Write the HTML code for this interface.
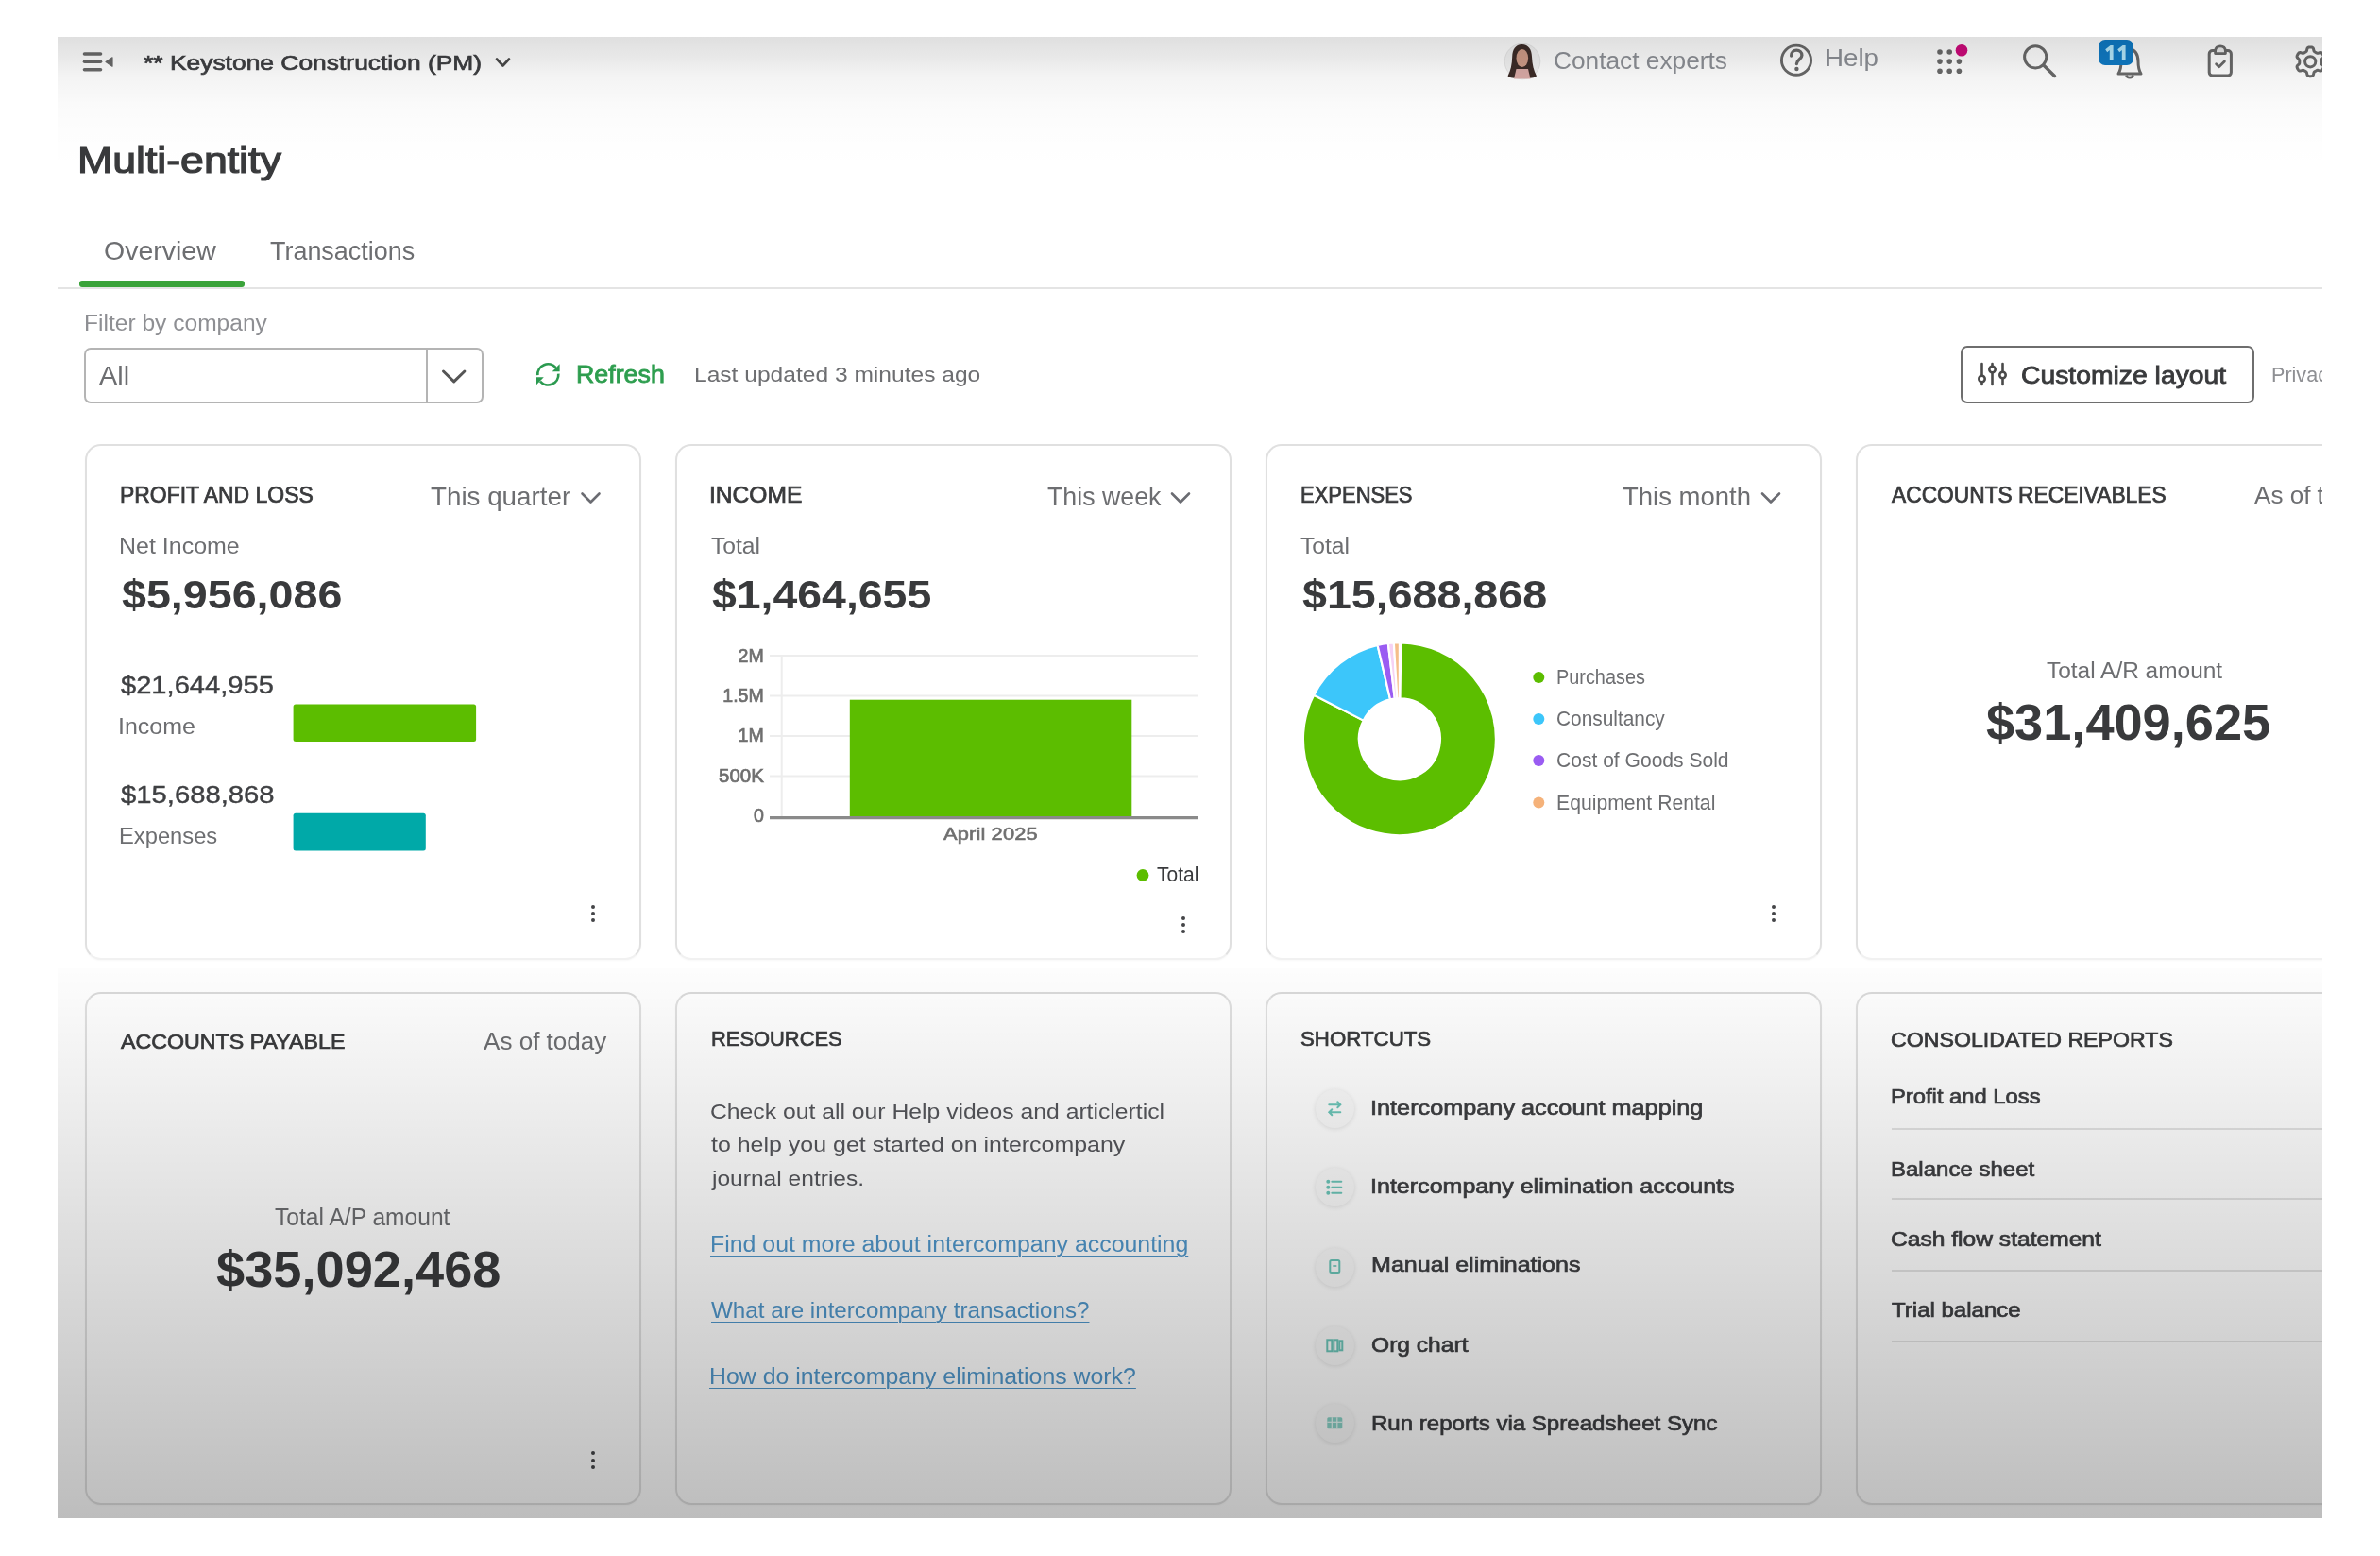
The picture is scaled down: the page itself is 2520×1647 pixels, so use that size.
<!DOCTYPE html>
<html><head><meta charset="utf-8"><title>Multi-entity</title>
<style>
html,body{margin:0;padding:0;background:#fff;}
body{width:2520px;height:1647px;position:relative;overflow:hidden;font-family:"Liberation Sans", sans-serif;}
#clip{position:absolute;left:0;top:0;width:2520px;height:1647px;clip-path:inset(39px 61px 40px 61px);background:#fff;filter:blur(0.7px);}
.abs{position:absolute;}
.t{position:absolute;line-height:1;white-space:nowrap;}
.card{position:absolute;box-sizing:border-box;border:2px solid #e0e0e0;border-radius:17px;background:#fff;box-shadow:0 1px 2px rgba(0,0,0,0.03);}
.r1{border-bottom-color:#f1f1f1;}
.r2{border-top-color:#dadada;}
.dot{position:absolute;width:3.9px;height:3.9px;border-radius:50%;background:#444548;}
.sc{position:absolute;width:41px;height:41px;border-radius:50%;background:#fafafa;box-shadow:0 1px 5px rgba(0,0,0,0.11);}
</style></head>
<body><div id="clip">
<div class="abs" style="left:61px;top:304px;width:2398px;height:2.4px;background:#e4e4e4"></div>
<div class="abs" style="left:84px;top:297.3px;width:174.7px;height:6.5px;background:#3aa33a;border-radius:3px"></div>
<div class="abs" style="left:89.3px;top:368px;width:422.3px;height:59.3px;box-sizing:border-box;border:2px solid #b4b4b4;border-radius:7px"></div>
<div class="abs" style="left:450.7px;top:369px;width:2px;height:57.3px;background:#b4b4b4"></div>
<div class="abs" style="left:2076.4px;top:366.2px;width:310.9px;height:60.8px;box-sizing:border-box;border:2.6px solid #6e6e6e;border-radius:7px"></div>
<div class="card r1" style="left:90px;top:470px;width:589px;height:546px"></div>
<div class="card r1" style="left:715px;top:470px;width:589px;height:546px"></div>
<div class="card r1" style="left:1340px;top:470px;width:589px;height:546px"></div>
<div class="card r1" style="left:1965px;top:470px;width:589px;height:546px"></div>
<div class="card r2" style="left:90px;top:1050px;width:589px;height:543px"></div>
<div class="card r2" style="left:715px;top:1050px;width:589px;height:543px"></div>
<div class="card r2" style="left:1340px;top:1050px;width:589px;height:543px"></div>
<div class="card r2" style="left:1965px;top:1050px;width:589px;height:543px"></div>

<!-- header icons -->
<svg class="abs" style="left:0;top:0" width="2520" height="460" viewBox="0 0 2520 460">
  <g stroke="#6a6a6a" stroke-width="3.6" stroke-linecap="round">
    <line x1="89.5" y1="57" x2="106.5" y2="57"/><line x1="89.5" y1="65.3" x2="106.5" y2="65.3"/><line x1="89.5" y1="73.8" x2="106.5" y2="73.8"/>
  </g>
  <path d="M112,65.5 L119,60.8 L119,70.2 Z" fill="#6a6a6a" stroke="#6a6a6a" stroke-width="1.2" stroke-linejoin="round"/>
  <path d="M526,62.5 L532.5,69.5 L539,62.5" fill="none" stroke="#4a4a4a" stroke-width="2.6" stroke-linecap="round" stroke-linejoin="round"/>
  <!-- avatar -->
  <circle cx="1612" cy="65" r="18.8" fill="#f3f3f3" stroke="#e6e6e6" stroke-width="1"/>
  <path d="M1611.5,47 C1604.5,47 1601.5,52.5 1601.2,60 C1601,68 1599.5,75 1596.5,80.5 C1600,83 1604.5,83.2 1607,82 L1616.5,82 C1619,83.2 1623.5,83 1627,80.5 C1624,75 1622.3,68 1622,60 C1621.8,52.5 1618.5,47 1611.5,47 Z" fill="#3d2c28"/>
  <ellipse cx="1611.8" cy="61.5" rx="6.3" ry="9.6" fill="#cf9c88"/>
  <path d="M1605.5,73 L1618,73 L1620.5,83.5 L1603,83.5 Z" fill="#d9aaa6"/>
  <!-- help -->
  <circle cx="1902" cy="63.7" r="15.6" fill="none" stroke="#6a6a6a" stroke-width="2.9"/>
  <path d="M1896.6,59 C1896.6,55.2 1899.2,53.2 1902.2,53.2 C1905.6,53.2 1907.9,55.6 1907.9,58.5 C1907.9,62.8 1902.4,63 1902.4,67.6" fill="none" stroke="#6a6a6a" stroke-width="3.3" stroke-linecap="round"/>
  <circle cx="1902.4" cy="73" r="2.2" fill="#6a6a6a"/>
  <!-- grid -->
  <g fill="#6a6a6a">
    <circle cx="2054" cy="55" r="2.8"/><circle cx="2064.2" cy="55" r="2.8"/>
    <circle cx="2054" cy="65.1" r="2.8"/><circle cx="2064.2" cy="65.1" r="2.8"/><circle cx="2074.4" cy="65.1" r="2.8"/>
    <circle cx="2054" cy="75.3" r="2.8"/><circle cx="2064.2" cy="75.3" r="2.8"/><circle cx="2074.4" cy="75.3" r="2.8"/>
  </g>
  <circle cx="2077" cy="53.2" r="6.3" fill="#cf0a7c"/>
  <!-- search -->
  <circle cx="2155.2" cy="60.3" r="11.6" fill="none" stroke="#6a6a6a" stroke-width="3"/>
  <line x1="2163.8" y1="69" x2="2175.5" y2="80.5" stroke="#6a6a6a" stroke-width="3.4" stroke-linecap="round"/>
  <!-- bell -->
  <path d="M2243,78 C2245,75 2246,71 2246,65 C2246,57 2250,52 2255,52 C2260,52 2264,57 2264,65 C2264,71 2265,75 2267,78 Z" fill="none" stroke="#6a6a6a" stroke-width="3" stroke-linejoin="round"/>
  <path d="M2251.5,79.5 C2252,83 2258,83 2258.5,79.5" fill="none" stroke="#6a6a6a" stroke-width="2.6"/>
  <rect x="2222" y="42" width="37" height="27" rx="7" fill="#0f7bc6"/>
  <!-- clipboard -->
  <rect x="2339.2" y="53.5" width="23.2" height="26.6" rx="3.5" fill="none" stroke="#6a6a6a" stroke-width="3"/>
  <path d="M2345.6,56.6 L2345.6,54 C2345.6,50.6 2348,48.8 2351,48.8 C2354,48.8 2356.4,50.6 2356.4,54 L2356.4,56.6 Z" fill="#ececec" stroke="#6a6a6a" stroke-width="2.8" stroke-linejoin="round"/>
  <path d="M2346.6,67.8 L2349.6,70.8 L2355.4,65" fill="none" stroke="#6a6a6a" stroke-width="2.8" stroke-linecap="round" stroke-linejoin="round"/>
  <!-- gear -->
  <path d="M2446.20,49.90 L2446.74,49.91 L2447.27,49.96 L2447.80,50.05 L2448.32,50.20 L2448.81,50.49 L2449.24,51.01 L2449.55,51.85 L2449.77,52.86 L2449.97,53.71 L2450.22,54.25 L2450.53,54.59 L2450.86,54.83 L2451.21,55.03 L2451.55,55.23 L2451.90,55.43 L2452.24,55.63 L2452.59,55.83 L2452.94,56.03 L2453.31,56.19 L2453.76,56.29 L2454.36,56.24 L2455.19,55.99 L2456.17,55.67 L2457.06,55.52 L2457.72,55.63 L2458.21,55.91 L2458.61,56.29 L2458.95,56.70 L2459.26,57.14 L2459.54,57.60 L2459.79,58.07 L2460.02,58.56 L2460.21,59.06 L2460.33,59.59 L2460.33,60.16 L2460.10,60.78 L2459.53,61.48 L2458.75,62.17 L2458.12,62.77 L2457.78,63.26 L2457.64,63.69 L2457.60,64.10 L2457.59,64.50 L2457.60,64.90 L2457.60,65.30 L2457.60,65.70 L2457.59,66.10 L2457.60,66.50 L2457.64,66.91 L2457.78,67.34 L2458.12,67.83 L2458.75,68.43 L2459.53,69.12 L2460.10,69.82 L2460.33,70.44 L2460.33,71.01 L2460.21,71.54 L2460.02,72.04 L2459.79,72.53 L2459.54,73.00 L2459.26,73.46 L2458.95,73.90 L2458.61,74.31 L2458.21,74.69 L2457.72,74.97 L2457.06,75.08 L2456.17,74.93 L2455.19,74.61 L2454.36,74.36 L2453.76,74.31 L2453.31,74.41 L2452.94,74.57 L2452.59,74.77 L2452.24,74.97 L2451.90,75.17 L2451.55,75.37 L2451.21,75.57 L2450.86,75.77 L2450.53,76.01 L2450.22,76.35 L2449.97,76.89 L2449.77,77.74 L2449.55,78.75 L2449.24,79.59 L2448.81,80.11 L2448.32,80.40 L2447.80,80.55 L2447.27,80.64 L2446.74,80.69 L2446.20,80.70 L2445.66,80.69 L2445.13,80.64 L2444.60,80.55 L2444.08,80.40 L2443.59,80.11 L2443.16,79.59 L2442.85,78.75 L2442.63,77.74 L2442.43,76.89 L2442.18,76.35 L2441.87,76.01 L2441.54,75.77 L2441.19,75.57 L2440.85,75.37 L2440.50,75.17 L2440.16,74.97 L2439.81,74.77 L2439.46,74.57 L2439.09,74.41 L2438.64,74.31 L2438.04,74.36 L2437.21,74.61 L2436.23,74.93 L2435.34,75.08 L2434.68,74.97 L2434.19,74.69 L2433.79,74.31 L2433.45,73.90 L2433.14,73.46 L2432.86,73.00 L2432.61,72.53 L2432.38,72.04 L2432.19,71.54 L2432.07,71.01 L2432.07,70.44 L2432.30,69.82 L2432.87,69.12 L2433.65,68.43 L2434.28,67.83 L2434.62,67.34 L2434.76,66.91 L2434.80,66.50 L2434.81,66.10 L2434.80,65.70 L2434.80,65.30 L2434.80,64.90 L2434.81,64.50 L2434.80,64.10 L2434.76,63.69 L2434.62,63.26 L2434.28,62.77 L2433.65,62.17 L2432.87,61.48 L2432.30,60.78 L2432.07,60.16 L2432.07,59.59 L2432.19,59.06 L2432.38,58.56 L2432.61,58.07 L2432.86,57.60 L2433.14,57.14 L2433.45,56.70 L2433.79,56.29 L2434.19,55.91 L2434.68,55.63 L2435.34,55.52 L2436.23,55.67 L2437.21,55.99 L2438.04,56.24 L2438.64,56.29 L2439.09,56.19 L2439.46,56.03 L2439.81,55.83 L2440.16,55.63 L2440.50,55.43 L2440.85,55.23 L2441.19,55.03 L2441.54,54.83 L2441.87,54.59 L2442.18,54.25 L2442.43,53.71 L2442.63,52.86 L2442.85,51.85 L2443.16,51.01 L2443.59,50.49 L2444.08,50.20 L2444.60,50.05 L2445.13,49.96 L2445.66,49.91 Z" fill="none" stroke="#6a6a6a" stroke-width="3" stroke-linejoin="round"/>
  <circle cx="2446.2" cy="65.3" r="5.6" fill="none" stroke="#6a6a6a" stroke-width="3"/>
  <!-- refresh -->
  <g fill="none" stroke="#2b9a50" stroke-width="2.7" stroke-linecap="butt">
    <path d="M569.3,397.2 A11,11 0 0 1 588.6,389.2"/>
    <path d="M591.3,395.6 A11,11 0 0 1 572.0,403.6"/>
  </g>
  <path d="M592.6,385.2 L592.6,393.2 L584.8,393.2 Z" fill="#2b9a50"/>
  <path d="M568.0,399.2 L575.8,399.2 L568.0,407.2 Z" fill="#2b9a50"/>
  <!-- select chevron -->
  <path d="M469.5,393 L480.7,403.8 L491.9,393" fill="none" stroke="#555" stroke-width="3" stroke-linecap="round" stroke-linejoin="round"/>
  <!-- slider icon -->
  <g stroke="#4a4a4a" stroke-width="2.6" stroke-linecap="round" fill="#fff">
    <line x1="2098.5" y1="385" x2="2098.5" y2="407"/><line x1="2109.5" y1="385" x2="2109.5" y2="407"/><line x1="2120.5" y1="385" x2="2120.5" y2="407"/>
    <circle cx="2098.5" cy="401" r="3.2"/><circle cx="2109.5" cy="391" r="3.2"/><circle cx="2120.5" cy="397" r="3.2"/>
  </g>
</svg>


<svg class="abs" style="left:0;top:440px" width="2520" height="600" viewBox="0 440 2520 600">
  <!-- card chevrons -->
  <g fill="none" stroke="#6b6c72" stroke-width="2.6" stroke-linecap="round" stroke-linejoin="round">
    <path d="M616.5,522.5 L625.5,531.5 L634.5,522.5"/>
    <path d="M1241,522.5 L1250,531.5 L1259,522.5"/>
    <path d="M1866,522.5 L1875,531.5 L1884,522.5"/>
  </g>
  <!-- bars card1 -->
  <rect x="310.6" y="745.4" width="193.5" height="39.6" rx="2.5" fill="#5cbd00"/>
  <rect x="310.6" y="860.7" width="140.2" height="39.7" rx="2.5" fill="#00a9a8"/>
  <!-- bar chart -->
  <g stroke="#ededed" stroke-width="2">
    <line x1="815" y1="694.1" x2="1269" y2="694.1"/><line x1="815" y1="736.6" x2="1269" y2="736.6"/>
    <line x1="815" y1="779.1" x2="1269" y2="779.1"/><line x1="815" y1="821.5" x2="1269" y2="821.5"/>
    <line x1="827.7" y1="694" x2="827.7" y2="864"/>
  </g>
  <rect x="899.8" y="740.7" width="298.5" height="124" fill="#5cbd00"/>
  <line x1="815" y1="865.6" x2="1269" y2="865.6" stroke="#8a8a8a" stroke-width="3.2"/>
  <circle cx="1210" cy="926.5" r="6.4" fill="#5cbd00"/>
  <!-- donut -->
  <path d="M1483.32,680.31 A102,102 0 1 1 1391.18,735.68 L1443.66,762.64 A43,43 0 1 0 1482.50,739.30 Z" fill="#5cbe00" stroke="#fff" stroke-width="2.2"/><path d="M1391.18,735.68 A102,102 0 0 1 1458.61,682.99 L1472.08,740.44 A43,43 0 0 0 1443.66,762.64 Z" fill="#3cc6fa" stroke="#fff" stroke-width="2.2"/><path d="M1458.61,682.99 A102,102 0 0 1 1469.82,681.02 L1476.81,739.60 A43,43 0 0 0 1472.08,740.44 Z" fill="#9a5cf2" stroke="#fff" stroke-width="2.2"/><path d="M1469.82,681.02 A102,102 0 0 1 1475.85,680.48 L1479.35,739.38 A43,43 0 0 0 1476.81,739.60 Z" fill="#f6d2f4" stroke="#fff" stroke-width="2.2"/><path d="M1475.85,680.48 A102,102 0 0 1 1481.90,680.30 L1481.90,739.30 A43,43 0 0 0 1479.35,739.38 Z" fill="#f5be8a" stroke="#fff" stroke-width="2.2"/>
  <circle cx="1629.3" cy="716.9" r="6" fill="#5cbd00"/>
  <circle cx="1629.3" cy="761.1" r="6" fill="#3cc6fa"/>
  <circle cx="1629.3" cy="805.1" r="6" fill="#9a5cf2"/>
  <circle cx="1629.3" cy="849.5" r="6" fill="#f5b27a"/>
</svg>

<div class="sc" style="left:1392.8px;top:1152.8px"></div><div class="sc" style="left:1392.8px;top:1236.3px"></div><div class="sc" style="left:1392.8px;top:1320.5px"></div><div class="sc" style="left:1392.8px;top:1403.8px"></div><div class="sc" style="left:1392.8px;top:1485.8px"></div>
<svg class="abs" style="left:0;top:1100px" width="2520" height="460" viewBox="0 1100 2520 460"><path d="M1407.3,1169.3 L1419.3,1169.3 M1416.3,1166.3 L1419.3,1169.3 L1416.3,1172.3 M1419.3,1177.3 L1407.3,1177.3 M1410.3,1174.3 L1407.3,1177.3 L1410.3,1180.3" stroke="#6cc5b8" stroke-width="2" fill="none" stroke-linecap="round"/><g stroke="#6cc5b8" stroke-width="2" stroke-linecap="round"><line x1="1410.3" y1="1250.8" x2="1420.3" y2="1250.8"/><circle cx="1406.3" cy="1250.8" r="1" fill="#6cc5b8"/><line x1="1410.3" y1="1256.8" x2="1420.3" y2="1256.8"/><circle cx="1406.3" cy="1256.8" r="1" fill="#6cc5b8"/><line x1="1410.3" y1="1262.8" x2="1420.3" y2="1262.8"/><circle cx="1406.3" cy="1262.8" r="1" fill="#6cc5b8"/></g><rect x="1408.3" y="1334" width="10" height="13" rx="1.5" stroke="#6cc5b8" stroke-width="2" fill="none"/><line x1="1411.3" y1="1340" x2="1415.3" y2="1340" stroke="#6cc5b8" stroke-width="1.6"/><g stroke="#6cc5b8" stroke-width="2" fill="none"><rect x="1405.3" y="1418.3" width="5" height="12"/><rect x="1412.3" y="1418.3" width="4" height="12"/><rect x="1418.3" y="1419.3" width="3" height="10"/></g><rect x="1405.3" y="1500.3" width="16" height="12" rx="1.5" fill="#6cc5b8" opacity="0.8"/><g stroke="#e8f6f3" stroke-width="1.2"><line x1="1410.3" y1="1500.3" x2="1410.3" y2="1512.3"/><line x1="1415.8" y1="1500.3" x2="1415.8" y2="1512.3"/><line x1="1405.3" y1="1505.3" x2="1421.3" y2="1505.3"/></g></svg>
<div class="abs" style="left:2002.7px;top:1194px;width:460px;height:2px;background:#e3e3e3"></div>
<div class="abs" style="left:2002.7px;top:1268px;width:460px;height:2px;background:#e3e3e3"></div>
<div class="abs" style="left:2002.7px;top:1343.7px;width:460px;height:2px;background:#e3e3e3"></div>
<div class="abs" style="left:2002.7px;top:1419px;width:460px;height:2px;background:#e3e3e3"></div>
<div class="dot" style="left:626.35px;top:957.85px"></div><div class="dot" style="left:626.35px;top:965.05px"></div><div class="dot" style="left:626.35px;top:972.25px"></div>
<div class="dot" style="left:1251.45px;top:970.05px"></div><div class="dot" style="left:1251.45px;top:977.25px"></div><div class="dot" style="left:1251.45px;top:984.45px"></div>
<div class="dot" style="left:1876.05px;top:957.65px"></div><div class="dot" style="left:1876.05px;top:964.85px"></div><div class="dot" style="left:1876.05px;top:972.05px"></div>
<div class="dot" style="left:626.15px;top:1536.45px"></div><div class="dot" style="left:626.15px;top:1543.65px"></div><div class="dot" style="left:626.15px;top:1550.85px"></div>
<div class="t" style="left:151.82px;top:55.58px;font-size:22.44px;font-weight:400;color:#3d3e41;letter-spacing:0.000px;transform:scaleX(1.1771);transform-origin:0 0;-webkit-text-stroke:0.72px #3d3e41;">** Keystone Construction (PM)</div>
<div class="t" style="left:1645.49px;top:52.18px;font-size:25.94px;font-weight:400;color:#8d9096;letter-spacing:0.000px;transform:scaleX(1.0128);transform-origin:0 0;">Contact experts</div>
<div class="t" style="left:1931.85px;top:48.80px;font-size:25.80px;font-weight:400;color:#8d9096;letter-spacing:0.000px;transform:scaleX(1.0753);transform-origin:0 0;">Help</div>
<div class="t" style="left:82.26px;top:150.81px;font-size:38.78px;font-weight:400;color:#393a3c;letter-spacing:0.000px;transform:scaleX(1.1510);transform-origin:0 0;-webkit-text-stroke:1.24px #393a3c;">Multi-entity</div>
<div class="t" style="left:109.75px;top:251.80px;font-size:27.10px;font-weight:400;color:#6d6e71;letter-spacing:-0.000px;transform:scaleX(1.0521);transform-origin:0 0;">Overview</div>
<div class="t" style="left:286.40px;top:251.80px;font-size:27.10px;font-weight:400;color:#6d6e71;letter-spacing:0.000px;transform:scaleX(0.9938);transform-origin:0 0;">Transactions</div>
<div class="t" style="left:89.23px;top:331.23px;font-size:23.04px;font-weight:400;color:#8e8f93;letter-spacing:0.000px;transform:scaleX(1.0666);transform-origin:0 0;">Filter by company</div>
<div class="t" style="left:104.80px;top:383.68px;font-size:27.25px;font-weight:400;color:#6d6e71;letter-spacing:0.000px;transform:scaleX(1.0576);transform-origin:0 0;">All</div>
<div class="t" style="left:610.35px;top:383.52px;font-size:25.76px;font-weight:400;color:#2e9e4f;letter-spacing:0.000px;transform:scaleX(1.0403);transform-origin:0 0;-webkit-text-stroke:0.82px #2e9e4f;">Refresh</div>
<div class="t" style="left:735.25px;top:387.00px;font-size:21.30px;font-weight:400;color:#6d6e71;letter-spacing:0.000px;transform:scaleX(1.1536);transform-origin:0 0;">Last updated 3 minutes ago</div>
<div class="t" style="left:2140.32px;top:384.53px;font-size:24.93px;font-weight:400;color:#393a3c;letter-spacing:-0.000px;transform:scaleX(1.1360);transform-origin:0 0;-webkit-text-stroke:0.80px #393a3c;">Customize layout</div>
<div class="t" style="left:2405.00px;top:386.45px;font-size:21.59px;font-weight:400;color:#8e8f93;letter-spacing:0.000px;">Privacy</div>
<div class="t" style="left:126.77px;top:512.70px;font-size:22.99px;font-weight:400;color:#393a3c;letter-spacing:0.000px;transform:scaleX(0.9976);transform-origin:0 0;-webkit-text-stroke:0.74px #393a3c;">PROFIT AND LOSS</div>
<div class="t" style="left:455.90px;top:511.89px;font-size:27.83px;font-weight:400;color:#6d6e71;letter-spacing:0.000px;transform:scaleX(0.9978);transform-origin:0 0;">This quarter</div>
<div class="t" style="left:126.33px;top:566.88px;font-size:23.33px;font-weight:400;color:#6d6e71;letter-spacing:0.000px;transform:scaleX(1.0707);transform-origin:0 0;">Net Income</div>
<div class="t" style="left:128.70px;top:608.81px;font-size:41.88px;font-weight:700;color:#393a3c;letter-spacing:0.000px;transform:scaleX(1.1133);transform-origin:0 0;">$5,956,086</div>
<div class="t" style="left:127.63px;top:712.33px;font-size:26.35px;font-weight:400;color:#3f4043;letter-spacing:0.000px;transform:scaleX(1.1047);transform-origin:0 0;-webkit-text-stroke:0.42px #3f4043;">$21,644,955</div>
<div class="t" style="left:125.32px;top:757.27px;font-size:24.06px;font-weight:400;color:#6d6e71;letter-spacing:0.000px;transform:scaleX(1.0394);transform-origin:0 0;">Income</div>
<div class="t" style="left:127.63px;top:827.63px;font-size:26.35px;font-weight:400;color:#3f4043;letter-spacing:0.000px;transform:scaleX(1.1095);transform-origin:0 0;-webkit-text-stroke:0.42px #3f4043;">$15,688,868</div>
<div class="t" style="left:126.38px;top:873.98px;font-size:23.33px;font-weight:400;color:#6d6e71;letter-spacing:-0.000px;transform:scaleX(1.0170);transform-origin:0 0;">Expenses</div>
<div class="t" style="left:751.45px;top:512.70px;font-size:22.99px;font-weight:400;color:#393a3c;letter-spacing:0.000px;transform:scaleX(1.0693);transform-origin:0 0;-webkit-text-stroke:0.74px #393a3c;">INCOME</div>
<div class="t" style="left:1108.60px;top:511.89px;font-size:27.83px;font-weight:400;color:#6d6e71;letter-spacing:0.000px;transform:scaleX(0.9610);transform-origin:0 0;">This week</div>
<div class="t" style="left:753.00px;top:566.88px;font-size:23.33px;font-weight:400;color:#6d6e71;letter-spacing:0.000px;transform:scaleX(1.0542);transform-origin:0 0;">Total</div>
<div class="t" style="left:753.70px;top:608.81px;font-size:41.88px;font-weight:700;color:#393a3c;letter-spacing:0.000px;transform:scaleX(1.1080);transform-origin:0 0;">$1,464,655</div>
<div class="t" style="left:998.75px;top:874.32px;font-size:18.56px;font-weight:400;color:#6f6f6f;letter-spacing:0.106px;transform:scaleX(1.1800);transform-origin:0 0;-webkit-text-stroke:0.59px #6f6f6f;">April 2025</div>
<div class="t" style="left:1225.20px;top:915.78px;font-size:21.45px;font-weight:400;color:#393a3c;letter-spacing:0.000px;transform:scaleX(0.9793);transform-origin:0 0;">Total</div>
<div class="t" style="left:1376.80px;top:512.70px;font-size:22.99px;font-weight:400;color:#393a3c;letter-spacing:0.000px;transform:scaleX(0.9561);transform-origin:0 0;-webkit-text-stroke:0.74px #393a3c;">EXPENSES</div>
<div class="t" style="left:1718.30px;top:511.89px;font-size:27.83px;font-weight:400;color:#6d6e71;letter-spacing:0.000px;transform:scaleX(0.9882);transform-origin:0 0;">This month</div>
<div class="t" style="left:1377.40px;top:566.88px;font-size:23.33px;font-weight:400;color:#6d6e71;letter-spacing:0.000px;transform:scaleX(1.0563);transform-origin:0 0;">Total</div>
<div class="t" style="left:1378.70px;top:608.81px;font-size:41.88px;font-weight:700;color:#393a3c;letter-spacing:0.000px;transform:scaleX(1.1124);transform-origin:0 0;">$15,688,868</div>
<div class="t" style="left:1648.07px;top:706.98px;font-size:21.45px;font-weight:400;color:#6d6e71;letter-spacing:0.000px;transform:scaleX(0.9270);transform-origin:0 0;">Purchases</div>
<div class="t" style="left:1648.03px;top:751.18px;font-size:21.45px;font-weight:400;color:#6d6e71;letter-spacing:0.000px;transform:scaleX(0.9731);transform-origin:0 0;">Consultancy</div>
<div class="t" style="left:1648.02px;top:795.38px;font-size:21.45px;font-weight:400;color:#6d6e71;letter-spacing:0.000px;transform:scaleX(0.9822);transform-origin:0 0;">Cost of Goods Sold</div>
<div class="t" style="left:1648.01px;top:839.58px;font-size:21.45px;font-weight:400;color:#6d6e71;letter-spacing:0.000px;transform:scaleX(0.9879);transform-origin:0 0;">Equipment Rental</div>
<div class="t" style="left:2003.06px;top:512.70px;font-size:22.99px;font-weight:400;color:#393a3c;letter-spacing:0.000px;transform:scaleX(0.9907);transform-origin:0 0;-webkit-text-stroke:0.74px #393a3c;">ACCOUNTS RECEIVABLES</div>
<div class="t" style="left:2387.10px;top:511.99px;font-size:25.22px;font-weight:400;color:#6d6e71;letter-spacing:0.000px;transform:scaleX(1.0333);transform-origin:0 0;">As of today</div>
<div class="t" style="left:2166.80px;top:698.56px;font-size:23.48px;font-weight:400;color:#6d6e71;letter-spacing:-0.000px;transform:scaleX(1.0416);transform-origin:0 0;">Total A/R amount</div>
<div class="t" style="left:2103.30px;top:738.28px;font-size:53.04px;font-weight:700;color:#393a3c;letter-spacing:0.000px;transform:scaleX(1.0210);transform-origin:0 0;">$31,409,625</div>
<div class="t" style="left:127.77px;top:1091.50px;font-size:22.30px;font-weight:400;color:#393a3c;letter-spacing:0.000px;transform:scaleX(1.0414);transform-origin:0 0;-webkit-text-stroke:0.71px #393a3c;">ACCOUNTS PAYABLE</div>
<div class="t" style="left:511.80px;top:1090.19px;font-size:25.22px;font-weight:400;color:#6d6e71;letter-spacing:0.000px;transform:scaleX(1.0333);transform-origin:0 0;">As of today</div>
<div class="t" style="left:291.40px;top:1275.99px;font-size:25.22px;font-weight:400;color:#6d6e71;letter-spacing:0.000px;transform:scaleX(0.9749);transform-origin:0 0;">Total A/P amount</div>
<div class="t" style="left:228.60px;top:1317.90px;font-size:52.90px;font-weight:700;color:#393a3c;letter-spacing:0.000px;transform:scaleX(1.0248);transform-origin:0 0;">$35,092,468</div>
<div class="t" style="left:752.56px;top:1088.52px;font-size:22.16px;font-weight:400;color:#393a3c;letter-spacing:0.000px;transform:scaleX(0.9879);transform-origin:0 0;-webkit-text-stroke:0.71px #393a3c;">RESOURCES</div>
<div class="t" style="left:752.11px;top:1166.20px;font-size:22.61px;font-weight:400;color:#55565b;letter-spacing:0.000px;transform:scaleX(1.0937);transform-origin:0 0;">Check out all our Help videos and articlerticl</div>
<div class="t" style="left:753.20px;top:1201.30px;font-size:22.61px;font-weight:400;color:#55565b;letter-spacing:0.000px;transform:scaleX(1.1036);transform-origin:0 0;">to help you get started on intercompany</div>
<div class="t" style="left:754.29px;top:1237.20px;font-size:22.61px;font-weight:400;color:#55565b;letter-spacing:0.000px;transform:scaleX(1.0864);transform-origin:0 0;">journal entries.</div>
<div class="t" style="left:752.14px;top:1305.66px;font-size:23.48px;font-weight:400;color:#5097cb;letter-spacing:-0.000px;transform:scaleX(1.0603);transform-origin:0 0;text-decoration:underline;text-decoration-thickness:1.4px;text-underline-offset:3.5px">Find out more about intercompany accounting</div>
<div class="t" style="left:753.20px;top:1375.71px;font-size:23.19px;font-weight:400;color:#5097cb;letter-spacing:0.000px;transform:scaleX(1.0427);transform-origin:0 0;text-decoration:underline;text-decoration-thickness:1.4px;text-underline-offset:3.5px">What are intercompany transactions?</div>
<div class="t" style="left:751.16px;top:1445.13px;font-size:24.35px;font-weight:400;color:#5097cb;letter-spacing:0.000px;transform:scaleX(1.0213);transform-origin:0 0;text-decoration:underline;text-decoration-thickness:1.4px;text-underline-offset:3.5px">How do intercompany eliminations work?</div>
<div class="t" style="left:1376.75px;top:1088.52px;font-size:22.16px;font-weight:400;color:#393a3c;letter-spacing:0.000px;transform:scaleX(1.0052);transform-origin:0 0;-webkit-text-stroke:0.71px #393a3c;">SHORTCUTS</div>
<div class="t" style="left:1450.64px;top:1161.50px;font-size:22.30px;font-weight:400;color:#3d3e41;letter-spacing:0.000px;transform:scaleX(1.1327);transform-origin:0 0;-webkit-text-stroke:0.71px #3d3e41;">Intercompany account mapping</div>
<div class="t" style="left:1450.65px;top:1244.70px;font-size:22.30px;font-weight:400;color:#3d3e41;letter-spacing:0.000px;transform:scaleX(1.1231);transform-origin:0 0;-webkit-text-stroke:0.71px #3d3e41;">Intercompany elimination accounts</div>
<div class="t" style="left:1451.78px;top:1328.00px;font-size:22.30px;font-weight:400;color:#3d3e41;letter-spacing:0.000px;transform:scaleX(1.1242);transform-origin:0 0;-webkit-text-stroke:0.71px #3d3e41;">Manual eliminations</div>
<div class="t" style="left:1451.79px;top:1412.50px;font-size:22.30px;font-weight:400;color:#3d3e41;letter-spacing:0.000px;transform:scaleX(1.1029);transform-origin:0 0;-webkit-text-stroke:0.71px #3d3e41;">Org chart</div>
<div class="t" style="left:1451.81px;top:1495.80px;font-size:22.30px;font-weight:400;color:#3d3e41;letter-spacing:0.000px;transform:scaleX(1.0790);transform-origin:0 0;-webkit-text-stroke:0.71px #3d3e41;">Run reports via Spreadsheet Sync</div>
<div class="t" style="left:2002.03px;top:1089.90px;font-size:22.30px;font-weight:400;color:#393a3c;letter-spacing:0.000px;transform:scaleX(1.0384);transform-origin:0 0;-webkit-text-stroke:0.71px #393a3c;">CONSOLIDATED REPORTS</div>
<div class="t" style="left:2002.01px;top:1150.32px;font-size:22.16px;font-weight:400;color:#3d3e41;letter-spacing:0.000px;transform:scaleX(1.0731);transform-origin:0 0;-webkit-text-stroke:0.71px #3d3e41;">Profit and Loss</div>
<div class="t" style="left:2002.00px;top:1227.02px;font-size:22.16px;font-weight:400;color:#3d3e41;letter-spacing:0.000px;transform:scaleX(1.0837);transform-origin:0 0;-webkit-text-stroke:0.71px #3d3e41;">Balance sheet</div>
<div class="t" style="left:2001.98px;top:1300.82px;font-size:22.16px;font-weight:400;color:#3d3e41;letter-spacing:0.000px;transform:scaleX(1.1104);transform-origin:0 0;-webkit-text-stroke:0.71px #3d3e41;">Cash flow statement</div>
<div class="t" style="left:2003.08px;top:1376.12px;font-size:22.16px;font-weight:400;color:#3d3e41;letter-spacing:0.000px;transform:scaleX(1.0846);transform-origin:0 0;-webkit-text-stroke:0.71px #3d3e41;">Trial balance</div>
<div class="t" style="left:608.8px;width:200px;text-align:right;top:684.97px;font-size:19.57px;font-weight:400;color:#6f6f6f;-webkit-text-stroke:0.7px #6f6f6f">2M</div>
<div class="t" style="left:608.8px;width:200px;text-align:right;top:726.77px;font-size:19.57px;font-weight:400;color:#6f6f6f;-webkit-text-stroke:0.7px #6f6f6f">1.5M</div>
<div class="t" style="left:608.8px;width:200px;text-align:right;top:769.17px;font-size:19.57px;font-weight:400;color:#6f6f6f;-webkit-text-stroke:0.7px #6f6f6f">1M</div>
<div class="t" style="left:608.8px;width:200px;text-align:right;top:811.43px;font-size:20.43px;font-weight:400;color:#6f6f6f;-webkit-text-stroke:0.7px #6f6f6f">500K</div>
<div class="t" style="left:608.8px;width:200px;text-align:right;top:853.97px;font-size:19.57px;font-weight:400;color:#6f6f6f;-webkit-text-stroke:0.7px #6f6f6f">0</div>
<svg class="abs" style="left:2215px;top:40px" width="50" height="30" viewBox="2215 40 50 30"><path d="M2229.2,52.2 L2234.6,48 L2237.6,48 L2237.6,63.4 L2233.8,63.4 L2233.8,53 L2231.2,55.2 Z M2242.2,52.2 L2247.6,48 L2250.6,48 L2250.6,63.4 L2246.8,63.4 L2246.8,53 L2244.2,55.2 Z" fill="#b4e8fc"/></svg>
<div class="abs" style="left:61px;top:39px;width:2398px;height:140px;background:linear-gradient(to bottom,rgba(0,0,0,0.125) 0px,rgba(0,0,0,0.09) 21px,rgba(0,0,0,0.047) 41px,rgba(0,0,0,0.02) 71px,rgba(0,0,0,0.008) 101px,rgba(0,0,0,0) 140px)"></div>
<div class="abs" style="left:61px;top:1025px;width:2398px;height:582px;background:linear-gradient(to bottom,rgba(0,0,0,0.008) 0px,rgba(0,0,0,0.26) 582px)"></div>
</div></body></html>
